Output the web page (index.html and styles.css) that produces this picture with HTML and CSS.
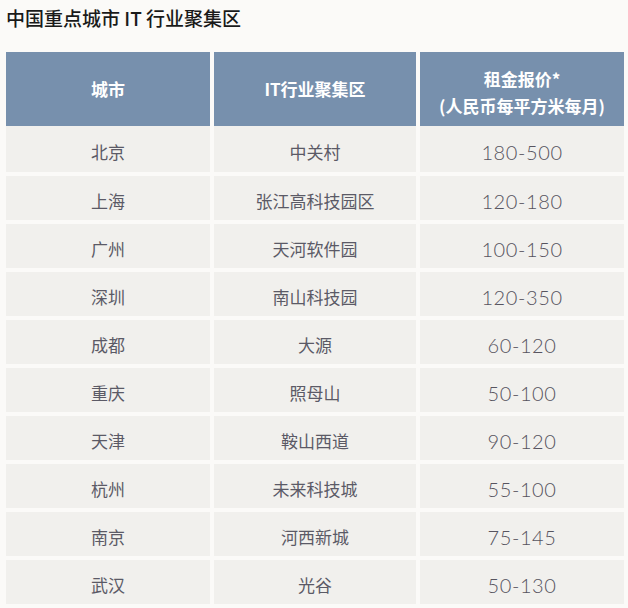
FILE: index.html
```html
<!DOCTYPE html>
<html lang="zh">
<head>
<meta charset="utf-8">
<link rel="stylesheet" href="styles.css">
</head>
<body>
<h1 class="title">中国重点城市 IT 行业聚集区</h1>
<div class="table">
  <div class="th">城市</div>
  <div class="th">IT行业聚集区</div>
  <div class="th th-two">租金报价*<br>(人民币每平方米每月)</div>

  <div class="td first">北京</div><div class="td first">中关村</div><div class="td num first">180-500</div>
  <div class="td">上海</div><div class="td">张江高科技园区</div><div class="td num">120-180</div>
  <div class="td">广州</div><div class="td">天河软件园</div><div class="td num">100-150</div>
  <div class="td">深圳</div><div class="td">南山科技园</div><div class="td num">120-350</div>
  <div class="td">成都</div><div class="td">大源</div><div class="td num">60-120</div>
  <div class="td">重庆</div><div class="td">照母山</div><div class="td num">50-100</div>
  <div class="td">天津</div><div class="td">鞍山西道</div><div class="td num">90-120</div>
  <div class="td">杭州</div><div class="td">未来科技城</div><div class="td num">55-100</div>
  <div class="td">南京</div><div class="td">河西新城</div><div class="td num">75-145</div>
  <div class="td">武汉</div><div class="td">光谷</div><div class="td num">50-130</div>
</div>
</body>
</html>
```

FILE: styles.css
```css
html, body {
  margin: 0;
  padding: 0;
  background: #fbfaf8;
}
body {
  font-family: "Noto Sans CJK SC", "Noto Sans", sans-serif;
  color: #5b5a66;
}
.title {
  margin: 0;
  padding: 4px 0 0 6px;
  height: 52px;
  box-sizing: border-box;
  font-size: 19px;
  line-height: 28px;
  font-weight: 500;
  color: #1a1a1a;
}
.table {
  display: grid;
  grid-template-columns: 204px 202px 204px;
  column-gap: 4px;
  row-gap: 4px;
  margin-left: 6px;
}
.th {
  background: #7790ad;
  color: #ffffff;
  height: 74px;
  margin-bottom: -4px;
  box-sizing: border-box;
  display: flex;
  align-items: center;
  justify-content: center;
  text-align: center;
  font-size: 17px;
  font-weight: 700;
  line-height: 24px;
}
.th-two {
  line-height: 27px;
  padding-top: 6px;
}
.td {
  background: #f1f0ed;
  height: 44px;
  box-sizing: border-box;
  padding-top: 5px;
  display: flex;
  align-items: center;
  justify-content: center;
  font-size: 17px;
}
.td.first {
  height: 46px;
}
.num {
  font-family: Lato, "Noto Sans", sans-serif;
  font-size: 20px;
  font-weight: 300;
  letter-spacing: 0.6px;
  color: #57545f;
}
```
